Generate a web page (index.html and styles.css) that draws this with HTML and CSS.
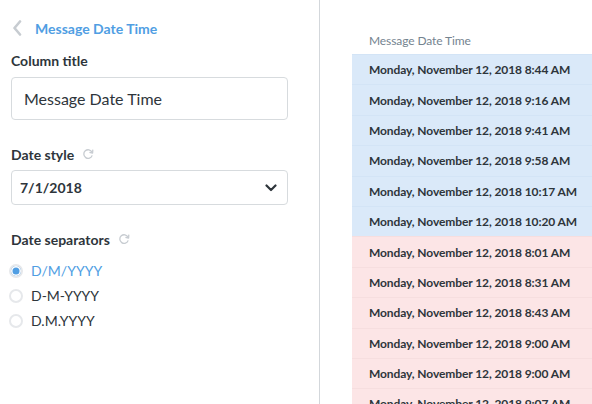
FILE: index.html
```html
<!DOCTYPE html>
<html>
<head>
<meta charset="utf-8">
<link rel="stylesheet" href="styles.css">
</head>
<body>
<div class="page">
  <aside class="sidebar">
    <div class="back">
      <svg class="chev" width="10" height="16" viewBox="0 0 10 16"><path d="M8 1.5 L2.5 8 L8 14.5" fill="none" stroke="#c7ccd1" stroke-width="2.6" stroke-linecap="round" stroke-linejoin="round"/></svg>
      <span>Message Date Time</span>
    </div>
    <div class="label first">Column title</div>
    <div class="input">Message Date Time</div>
    <div class="label gap">Date style
      <svg class="reset" width="12" height="12" viewBox="0 0 12 12"><path d="M10 4.2 A4.3 4.3 0 1 0 10.2 7.4" fill="none" stroke="#c7ccd1" stroke-width="1.3"/><path d="M10.8 1.6 L10.6 5 L7.4 4.4" fill="none" stroke="#c7ccd1" stroke-width="1.3" stroke-linejoin="round"/></svg>
    </div>
    <div class="select"><span>7/1/2018</span>
      <svg width="12" height="8" viewBox="0 0 12 8"><path d="M1.5 1.5 L6 6 L10.5 1.5" fill="none" stroke="#2e353b" stroke-width="2.2" stroke-linecap="round" stroke-linejoin="round"/></svg>
    </div>
    <div class="label gap2">Date separators
      <svg class="reset" width="12" height="12" viewBox="0 0 12 12"><path d="M10 4.2 A4.3 4.3 0 1 0 10.2 7.4" fill="none" stroke="#c7ccd1" stroke-width="1.3"/><path d="M10.8 1.6 L10.6 5 L7.4 4.4" fill="none" stroke="#c7ccd1" stroke-width="1.3" stroke-linejoin="round"/></svg>
    </div>
    <div class="radios">
      <div class="radio on"><span class="dot"></span>D/M/YYYY</div>
      <div class="radio"><span class="dot"></span>D-M-YYYY</div>
      <div class="radio"><span class="dot"></span>D.M.YYYY</div>
    </div>
  </aside>
  <main class="preview">
    <div class="table">
      <div class="th">Message Date Time</div>
      <div class="row blue">Monday, November 12, 2018 8:44 AM</div>
      <div class="row blue">Monday, November 12, 2018 9:16 AM</div>
      <div class="row blue">Monday, November 12, 2018 9:41 AM</div>
      <div class="row blue">Monday, November 12, 2018 9:58 AM</div>
      <div class="row blue">Monday, November 12, 2018 10:17 AM</div>
      <div class="row blue">Monday, November 12, 2018 10:20 AM</div>
      <div class="row pink">Monday, November 12, 2018 8:01 AM</div>
      <div class="row pink">Monday, November 12, 2018 8:31 AM</div>
      <div class="row pink">Monday, November 12, 2018 8:43 AM</div>
      <div class="row pink">Monday, November 12, 2018 9:00 AM</div>
      <div class="row pink">Monday, November 12, 2018 9:00 AM</div>
      <div class="row pink">Monday, November 12, 2018 9:07 AM</div>
    </div>
  </main>
</div>
</body>
</html>
```

FILE: styles.css
```css
html, body {
  margin: 0;
  padding: 0;
  background: #fff;
  font-family: Lato, "Noto Sans", sans-serif;
  color: #2e353b;
}
.page {
  display: flex;
  width: 592px;
  height: 404px;
  overflow: hidden;
}
.sidebar {
  width: 320px;
  flex: none;
  box-sizing: border-box;
  border-right: 1px solid #d3d7db;
  padding: 18px 31px 0 11px;
}
.back {
  display: flex;
  align-items: center;
  height: 20px;
  font-size: 14px;
  font-weight: 700;
  color: #509ee3;
}
.chev {
  margin-left: 1px;
  margin-right: 13px;
}
.label {
  display: flex;
  align-items: center;
  height: 20px;
  font-size: 14px;
  font-weight: 700;
  color: #2e353b;
}
.label.first { margin-top: 12px; }
.label.gap { margin-top: 24px; }
.label.gap2 { margin-top: 24px; }
.reset { margin-left: 8px; }
.input {
  margin-top: 7px;
  height: 43px;
  box-sizing: border-box;
  border: 1px solid #d7dbde;
  border-radius: 4px;
  padding-left: 12px;
  display: flex;
  align-items: center;
  font-size: 16px;
  color: #2e353b;
}
.select {
  margin-top: 6px;
  height: 35px;
  box-sizing: border-box;
  border: 1px solid #d7dbde;
  border-radius: 4px;
  padding: 0 10px 0 8px;
  display: flex;
  align-items: center;
  justify-content: space-between;
  font-size: 14px;
  font-weight: 700;
}
.radios {
  margin-top: 9px;
}
.radio {
  display: flex;
  align-items: center;
  height: 25px;
  font-size: 14px;
  color: #2e353b;
  margin-left: -2px;
}
.radio.on { color: #509ee3; }
.dot {
  width: 14px;
  height: 14px;
  box-sizing: border-box;
  border-radius: 50%;
  border: 2px solid #e6e8eb;
  margin-right: 8px;
  background: #fff;
}
.radio.on .dot {
  background: #509ee3;
  box-shadow: inset 0 0 0 1.5px #fff;
}
.preview {
  flex: 1;
  padding-top: 26px;
  padding-left: 32px;
}
.table {
  display: flex;
  flex-direction: column;
}
.th {
  height: 28px;
  display: flex;
  align-items: center;
  padding-left: 17px;
  font-size: 12px;
  color: #74838f;
  letter-spacing: -0.1px;
}
.row {
  height: 30.4px;
  box-sizing: border-box;
  display: flex;
  align-items: center;
  padding-left: 17px;
  font-size: 12px;
  font-weight: 700;
  color: #2e353b;
  white-space: nowrap;
  letter-spacing: -0.1px;
  border-top: 1px solid transparent;
}
.row.blue {
  background: #dae9f9;
  border-top-color: #d3e4f6;
}
.row.pink {
  background: #fce5e6;
  border-top-color: #f6dedf;
}
.row.blue:first-of-type { border-top-color: #dae9f9; }
```
